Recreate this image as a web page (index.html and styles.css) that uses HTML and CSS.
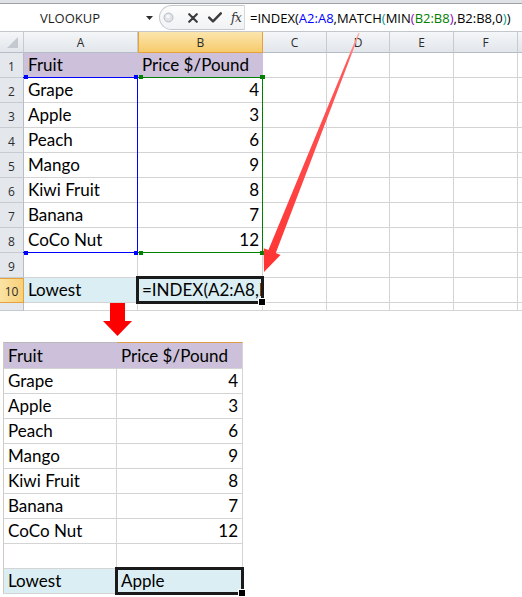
FILE: index.html
```html
<!DOCTYPE html>
<html>
<head>
<meta charset="utf-8">
<link rel="stylesheet" href="styles.css">
</head>
<body>
<div class="topbar"></div>
<div class="fbar">
  <div class="namebox">VLOOKUP</div>
  <div class="nb-drop"><svg width="7" height="4" viewBox="0 0 7 4"><polygon points="0,0 7,0 3.5,4" fill="#2d2d2d"/></svg></div>
  <div class="fx-ctl">
    <svg class="ic-dot" width="11" height="11" viewBox="0 0 11 11"><circle cx="5.5" cy="5.5" r="4.5" fill="#dfe2e6" stroke="#b9bec5"/><circle cx="5" cy="4.6" r="2" fill="#f4f5f7"/></svg>
    <svg class="ic-x" width="10" height="10" viewBox="0 0 10 10"><path d="M1.2 1.2 L8.8 8.8 M8.8 1.2 L1.2 8.8" stroke="#3b3b3b" stroke-width="2.1" stroke-linecap="round"/></svg>
    <svg class="ic-ok" width="14" height="11" viewBox="0 0 14 11"><path d="M1.2 5.6 L5 9.3 L12.8 1.3" fill="none" stroke="#3b3b3b" stroke-width="2.4" stroke-linecap="round" stroke-linejoin="round"/></svg>
    <span class="ic-fx">fx</span>
  </div>
  <div class="formula">=INDEX(<span class="f-blue">A2:A8</span>,MATCH<span class="f-teal">(</span>MIN<span class="f-purple">(</span><span class="f-green">B2:B8</span><span class="f-purple">)</span>,B2:B8,0<span class="f-teal">)</span>)</div>
</div>

<div class="sheet">
  <div class="h corner"><svg width="24" height="21" viewBox="0 0 24 21"><polygon points="18,5 18,16 7,16" fill="#c4c9d0"/></svg></div>
  <div class="h">A</div><div class="h sel">B</div><div class="h">C</div><div class="h">D</div><div class="h">E</div><div class="h">F</div><div class="h last"></div>

  <div class="r">1</div><div class="c hd">Fruit</div><div class="c hd">Price $/Pound</div><div class="c"></div><div class="c"></div><div class="c"></div><div class="c"></div><div class="c last"></div>
  <div class="r">2</div><div class="c">Grape</div><div class="c num">4</div><div class="c"></div><div class="c"></div><div class="c"></div><div class="c"></div><div class="c last"></div>
  <div class="r">3</div><div class="c">Apple</div><div class="c num">3</div><div class="c"></div><div class="c"></div><div class="c"></div><div class="c"></div><div class="c last"></div>
  <div class="r">4</div><div class="c">Peach</div><div class="c num">6</div><div class="c"></div><div class="c"></div><div class="c"></div><div class="c"></div><div class="c last"></div>
  <div class="r">5</div><div class="c">Mango</div><div class="c num">9</div><div class="c"></div><div class="c"></div><div class="c"></div><div class="c"></div><div class="c last"></div>
  <div class="r">6</div><div class="c">Kiwi Fruit</div><div class="c num">8</div><div class="c"></div><div class="c"></div><div class="c"></div><div class="c"></div><div class="c last"></div>
  <div class="r">7</div><div class="c">Banana</div><div class="c num">7</div><div class="c"></div><div class="c"></div><div class="c"></div><div class="c"></div><div class="c last"></div>
  <div class="r">8</div><div class="c">CoCo Nut</div><div class="c num">12</div><div class="c"></div><div class="c"></div><div class="c"></div><div class="c"></div><div class="c last"></div>
  <div class="r">9</div><div class="c"></div><div class="c"></div><div class="c"></div><div class="c"></div><div class="c"></div><div class="c"></div><div class="c last"></div>
  <div class="r sel">10</div><div class="c lo">Lowest</div><div class="c lo clip">=INDEX(A2:A8,M</div><div class="c"></div><div class="c"></div><div class="c"></div><div class="c"></div><div class="c last"></div>
  <div class="r"></div><div class="c"></div><div class="c"></div><div class="c"></div><div class="c"></div><div class="c"></div><div class="c"></div><div class="c last"></div>

  <div class="range green"><span class="hdl tl"></span><span class="hdl tr"></span><span class="hdl bl"></span><span class="hdl br"></span></div>
  <div class="range blue"><span class="hdl tl"></span><span class="hdl tr"></span><span class="hdl bl"></span><span class="hdl br"></span></div>
  <div class="active active-top"></div>
</div>

<div class="result">
  <div class="t hd t1 tc1">Fruit</div><div class="t hd t1 tc2 hd-orange">Price $/Pound</div>
  <div class="t tc1">Grape</div><div class="t num">4</div>
  <div class="t tc1">Apple</div><div class="t num">3</div>
  <div class="t tc1">Peach</div><div class="t num">6</div>
  <div class="t tc1">Mango</div><div class="t num">9</div>
  <div class="t tc1">Kiwi Fruit</div><div class="t num">8</div>
  <div class="t tc1">Banana</div><div class="t num">7</div>
  <div class="t tc1">CoCo Nut</div><div class="t num">12</div>
  <div class="t tc1"></div><div class="t"></div>
  <div class="t tc1 lo">Lowest</div><div class="t lo">Apple</div>
  <div class="active active-bottom"></div>
</div>

<svg class="annot" width="522" height="597" viewBox="0 0 522 597">
  <defs>
    <linearGradient id="ag" x1="0" y1="33" x2="0" y2="272" gradientUnits="userSpaceOnUse">
      <stop offset="0" stop-color="#ffb0b0"/>
      <stop offset="0.12" stop-color="#ff5a5a"/>
      <stop offset="1" stop-color="#ff3333"/>
    </linearGradient>
  </defs>
  <polygon points="358.4,32.7 359.6,33.3 275.8,253.1 280.5,254.9 264,272 263.7,248.3 268.4,250.1" fill="url(#ag)"/>
  <rect x="110" y="303" width="15" height="18" fill="#ff0000"/>
  <polygon points="103,321 132,321 117.5,336" fill="#ff0000"/>
</svg>
</body>
</html>
```

FILE: styles.css
```css
* { box-sizing: border-box; margin: 0; padding: 0; }

body {
  width: 522px;
  height: 597px;
  background: #ffffff;
  font-family: Lato, "Liberation Sans", sans-serif;
  color: #000;
  position: relative;
  overflow: hidden;
}

.topbar {
  height: 4px;
  background: #dfe2e6;
  border-bottom: 1px solid #9ea2a8;
}

.fbar {
  display: flex;
  align-items: center;
  height: 28px;
  background: #ffffff;
  border-bottom: 1px solid #c3c7cc;
}

.namebox {
  width: 140px;
  text-align: center;
  font-family: "Open Sans", "Liberation Sans", sans-serif;
  font-size: 13px;
  color: #1e1e1e;
}

.nb-drop {
  width: 18px;
  display: flex;
  justify-content: center;
  align-items: center;
}

.fx-ctl {
  margin-left: 1px;
  width: 86px;
  height: 25px;
  border: 1px solid #c3c8ce;
  border-right: 1px solid #d6d9dd;
  border-radius: 13px 0 0 13px;
  background: linear-gradient(#fdfdfd, #f0f2f4);
  display: flex;
  align-items: center;
}

.ic-dot { margin-left: 3px; }
.ic-x { margin-left: 14px; }
.ic-ok { margin-left: 10px; }

.ic-fx {
  margin-left: 9px;
  font-family: "DejaVu Serif", "Liberation Serif", serif;
  font-style: italic;
  font-size: 12px;
  color: #333;
  letter-spacing: -0.5px;
}

.formula {
  flex: 1;
  padding-left: 5px;
  font-family: "Open Sans", "Liberation Sans", sans-serif;
  font-size: 13px;
  white-space: nowrap;
  overflow: hidden;
  color: #000;
}

.f-blue { color: #0000ff; }
.f-green { color: #008000; }
.f-purple { color: #9900cc; }
.f-teal { color: #00a08a; }

/* ---------- sheet ---------- */
.sheet {
  display: grid;
  grid-template-columns: 24px 114px 125px 64px 63px 64px 64px 4px;
  grid-template-rows: 21px repeat(10, 25px) 8px;
  position: relative;
}

.h {
  background: linear-gradient(#f4f6f8, #e2e6eb);
  border-right: 1px solid #c6cbd1;
  border-bottom: 1px solid #b5bcc5;
  font-family: "Open Sans", "Liberation Sans", sans-serif;
  font-size: 12px;
  color: #2c2c2c;
  display: flex;
  align-items: center;
  justify-content: center;
}

.h.corner { display: block; }
.h.last { border-right: none; }

.h.sel {
  background: linear-gradient(#fbe5ad, #f7cb6c);
  border-bottom-color: #e5a13c;
  border-left: 1px solid #e5a13c;
  border-right-color: #e5a13c;
}

.r {
  background: #e4e8ed;
  border-right: 1px solid #b5bcc5;
  border-bottom: 1px solid #c6cbd1;
  font-family: "Open Sans", "Liberation Sans", sans-serif;
  font-size: 12px;
  color: #2c2c2c;
  display: flex;
  align-items: center;
  justify-content: center;
  padding-top: 3px;
}

.r.sel {
  background: linear-gradient(90deg, #fbe3a4, #f8d07a);
  border-right-color: #e5a13c;
  border-top: 1px solid #e5a13c;
  border-bottom-color: #e5a13c;
  padding-top: 2px;
}

.c {
  border-right: 1px solid #d4d4d4;
  border-bottom: 1px solid #d4d4d4;
  font-size: 17px;
  line-height: 20px;
  padding: 0 4px 2px 4px;
  display: flex;
  align-items: flex-end;
  white-space: nowrap;
  overflow: hidden;
}

.c.last { border-right: none; }
.c.clip { padding-right: 0; }

.hd {
  background: #ccc0da;
  border-right-color: #ccc0da;
}

.lo {
  background: #daeef3;
  border-right-color: #daeef3;
}

.num { justify-content: flex-end; padding-right: 3px; }

.range {
  position: absolute;
  top: -1px;
  left: -1px;
  right: 0;
  bottom: 0;
  grid-row: 3 / 10;
}

.range.blue {
  grid-column: 2 / 3;
  border: 1px solid #0000ff;
  border-left: none;
}

.range.green {
  grid-column: 3 / 4;
  border: 1px solid #008000;
}

.hdl {
  position: absolute;
  width: 4px;
  height: 4px;
}

.blue .hdl { background: #0000ff; }
.green .hdl { background: #008000; }

.hdl.tl, .hdl.tr { top: -3px; }
.hdl.bl, .hdl.br { bottom: -3px; }

.blue .hdl.tl, .blue .hdl.bl { left: 1px; }
.blue .hdl.tr, .blue .hdl.br { right: -1px; }
.green .hdl.tl, .green .hdl.bl { left: 1px; }
.green .hdl.tr, .green .hdl.br { right: -3px; width: 5px; }

.active {
  position: absolute;
  border: 3px solid #1a1a1a;
}

.active::after {
  content: "";
  position: absolute;
  right: -5px;
  bottom: -5px;
  width: 6px;
  height: 6px;
  background: #000;
  border: 1px solid #fff;
}

.active-top {
  grid-column: 3 / 4;
  grid-row: 11 / 12;
  top: -2px;
  left: -2px;
  right: -1px;
  bottom: -1px;
}

/* ---------- result table ---------- */
.result {
  margin: 31px 0 0 3px;
  width: 240px;
  display: grid;
  grid-template-columns: 114px 126px;
  grid-template-rows: 27px repeat(9, 25px);
  position: relative;
}

.t {
  border-right: 1px solid #d4d4d4;
  border-bottom: 1px solid #d4d4d4;
  font-size: 17px;
  line-height: 20px;
  padding: 0 4px 2px 4px;
  display: flex;
  align-items: flex-end;
  white-space: nowrap;
  overflow: hidden;
}

.tc1 { border-left: 1px solid #cfcac4; padding-left: 4px; }

.t1 { border-top: 1px solid #b9b9b9; }
.t1.hd-orange { border-top-color: #de9a45; }

.t.hd { border-right-color: #ccc0da; }
.t.tc2 { border-right-color: #d4d4d4; }

.active-bottom {
  grid-column: 2 / 3;
  grid-row: 10 / 11;
  top: -2px;
  left: -2px;
  right: -1px;
  bottom: -1px;
}

.annot {
  position: absolute;
  top: 0;
  left: 0;
  pointer-events: none;
}
```
